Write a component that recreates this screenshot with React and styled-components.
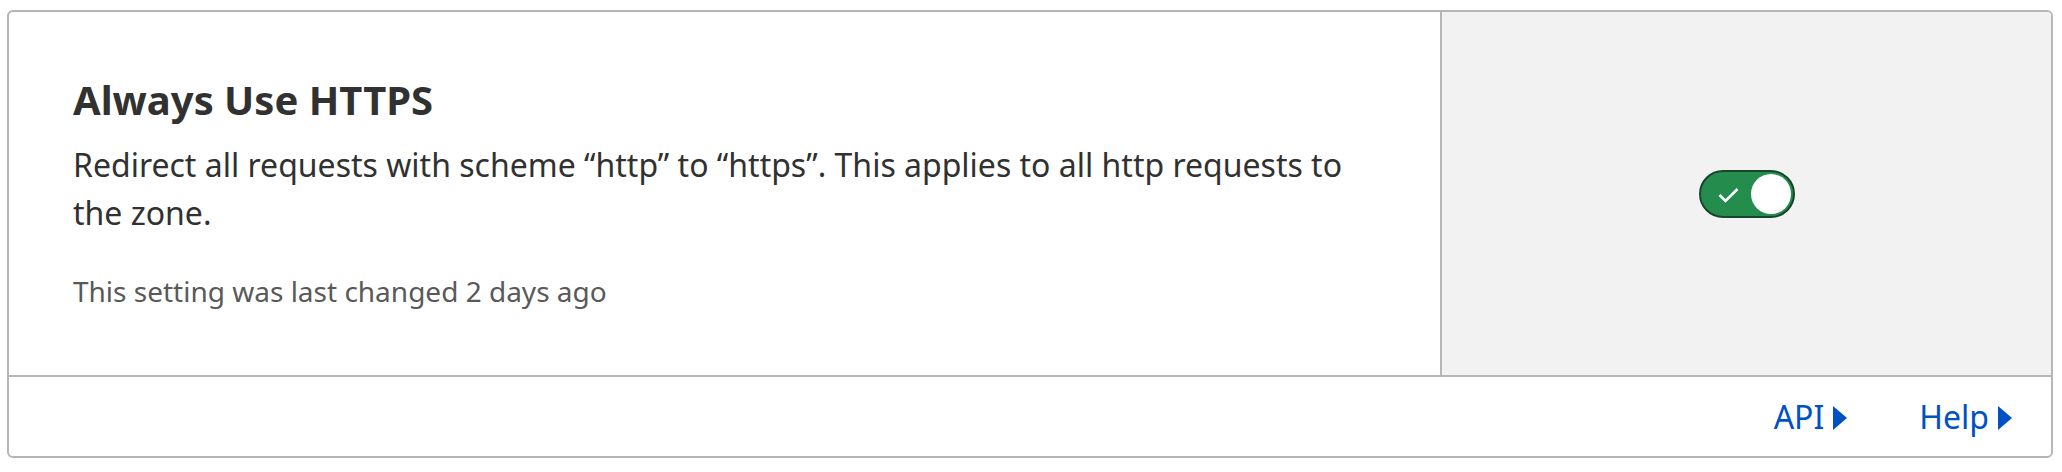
import React from "react";
import styled, { createGlobalStyle } from "styled-components";

const GlobalStyle = createGlobalStyle`
  html, body {
    margin: 0;
    padding: 0;
    background: #ffffff;
  }
  body {
    padding: 10px 9px 0 7px;
    font-family: "Noto Sans", "Open Sans", sans-serif;
    color: #313131;
  }
`;

const Card = styled.section`
  border: 2px solid #b6b6b6;
  border-radius: 6px;
  background: #ffffff;
  overflow: hidden;
`;

const Main = styled.div`
  display: grid;
  grid-template-columns: 1fr 611px;
  border-bottom: 2px solid #b6b6b6;
`;

const Info = styled.div`
  padding: 64px;
`;

const Title = styled.h3`
  margin: 0 0 17px;
  font-size: 40px;
  line-height: 48px;
  font-weight: 700;
  color: #313131;
`;

const Description = styled.p`
  margin: 0 0 34px;
  font-size: 32px;
  line-height: 48px;
  color: #313131;
`;

const Meta = styled.p`
  margin: 0;
  font-size: 28px;
  line-height: 40px;
  color: #595959;
`;

const Control = styled.div`
  display: flex;
  align-items: center;
  justify-content: center;
  background: #f2f2f2;
  border-left: 2px solid #b6b6b6;
`;

const Toggle = styled.button`
  position: relative;
  width: 96px;
  height: 48px;
  padding: 0;
  border: 2px solid #17472a;
  border-radius: 24px;
  background: #248c4c;
  cursor: pointer;
`;

const Check = styled.svg`
  position: absolute;
  left: 17px;
  top: 15px;
`;

const Knob = styled.span`
  position: absolute;
  right: 2px;
  top: 2px;
  width: 40px;
  height: 40px;
  border-radius: 50%;
  background: #ffffff;
`;

const Footer = styled.footer`
  display: flex;
  justify-content: flex-end;
  align-items: center;
  gap: 72px;
  height: 79px;
  padding-right: 39px;
`;

const FooterLink = styled.a`
  display: inline-flex;
  align-items: center;
  gap: 9px;
  font-size: 32px;
  line-height: 45px;
  color: #0051c3;
  text-decoration: none;
  cursor: pointer;
`;

const Caret = styled.span`
  display: inline-block;
  width: 0;
  height: 0;
  border-top: 12px solid transparent;
  border-bottom: 12px solid transparent;
  border-left: 14px solid #0051c3;
  margin-top: 2px;
`;

export default function App() {
  return (
    <>
      <GlobalStyle />
      <Card>
        <Main>
          <Info>
            <Title>Always Use HTTPS</Title>
            <Description>
              Redirect all requests with scheme “http” to “https”. This applies
              to all http requests to the zone.
            </Description>
            <Meta>This setting was last changed 2 days ago</Meta>
          </Info>
          <Control>
            <Toggle aria-pressed="true" aria-label="Always Use HTTPS">
              <Check width="21" height="16" viewBox="0 0 21 16">
                <path
                  d="M1.5 8 L7.5 14 L19.5 2"
                  fill="none"
                  stroke="#ffffff"
                  strokeWidth="2.6"
                />
              </Check>
              <Knob />
            </Toggle>
          </Control>
        </Main>
        <Footer>
          <FooterLink>
            API
            <Caret />
          </FooterLink>
          <FooterLink>
            Help
            <Caret />
          </FooterLink>
        </Footer>
      </Card>
    </>
  );
}
